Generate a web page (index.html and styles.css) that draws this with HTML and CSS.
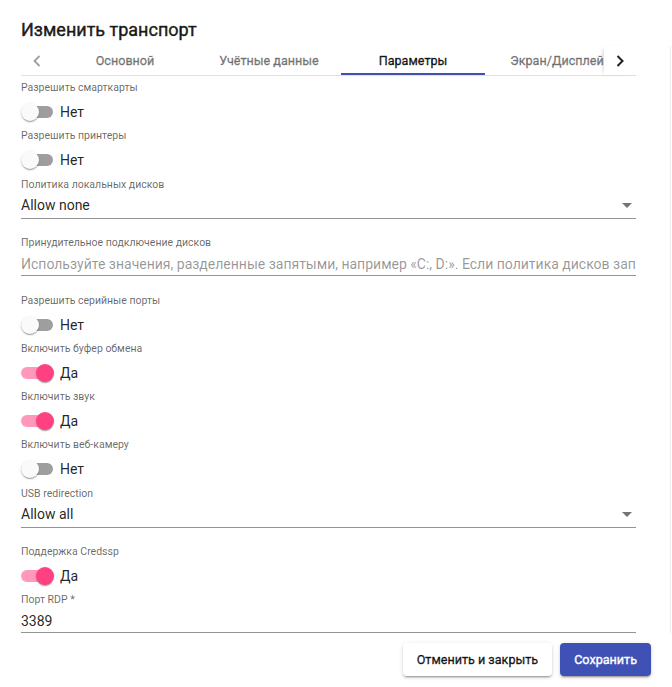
FILE: index.html
```html
<!DOCTYPE html>
<html lang="ru">
<head>
<meta charset="utf-8">
<title>Изменить транспорт</title>
<link rel="stylesheet" href="styles.css">
</head>
<body>
<div class="dialog">
  <h2 class="title">Изменить транспорт</h2>
  <div class="content">
    <div class="tabs">
      <div class="pager pager-left">
        <svg width="8" height="12" viewBox="0 0 8 12"><polyline points="6.5,1 1.5,6 6.5,11" fill="none" stroke="rgba(0,0,0,0.38)" stroke-width="1.8"/></svg>
      </div>
      <div class="tab-list">
        <div class="tab-track">
          <div class="tab">Основной</div>
          <div class="tab">Учётные данные</div>
          <div class="tab active">Параметры</div>
          <div class="tab">Экран/Дисплей</div>
        </div>
      </div>
      <div class="pager pager-right">
        <svg width="8" height="12" viewBox="0 0 8 12"><polyline points="1.5,1 6.5,6 1.5,11" fill="none" stroke="rgba(0,0,0,0.87)" stroke-width="2"/></svg>
      </div>
    </div>

    <div class="form">
      <div class="toggle-block">
        <div class="toggle-label">Разрешить смарткарты</div>
        <div class="toggle-row"><span class="switch"><span class="track"></span><span class="thumb"></span></span><span class="toggle-text">Нет</span></div>
      </div>
      <div class="toggle-block">
        <div class="toggle-label">Разрешить принтеры</div>
        <div class="toggle-row"><span class="switch"><span class="track"></span><span class="thumb"></span></span><span class="toggle-text">Нет</span></div>
      </div>

      <div class="field select-field">
        <div class="field-label">Политика локальных дисков</div>
        <div class="field-value"><span class="value-text">Allow none</span><span class="arrow"></span></div>
      </div>

      <div class="field input-field gap-toggle">
        <div class="field-label">Принудительное подключение дисков</div>
        <div class="field-value placeholder">Используйте значения, разделенные запятыми, например «C:, D:». Если политика дисков запрещает подключение, это поле игнорируется.</div>
      </div>

      <div class="toggle-block">
        <div class="toggle-label">Разрешить серийные порты</div>
        <div class="toggle-row"><span class="switch"><span class="track"></span><span class="thumb"></span></span><span class="toggle-text">Нет</span></div>
      </div>
      <div class="toggle-block">
        <div class="toggle-label">Включить буфер обмена</div>
        <div class="toggle-row"><span class="switch on"><span class="track"></span><span class="thumb"></span></span><span class="toggle-text">Да</span></div>
      </div>
      <div class="toggle-block">
        <div class="toggle-label">Включить звук</div>
        <div class="toggle-row"><span class="switch on"><span class="track"></span><span class="thumb"></span></span><span class="toggle-text">Да</span></div>
      </div>
      <div class="toggle-block">
        <div class="toggle-label">Включить веб-камеру</div>
        <div class="toggle-row"><span class="switch"><span class="track"></span><span class="thumb"></span></span><span class="toggle-text">Нет</span></div>
      </div>

      <div class="field select-field">
        <div class="field-label">USB redirection</div>
        <div class="field-value"><span class="value-text">Allow all</span><span class="arrow"></span></div>
      </div>

      <div class="toggle-block">
        <div class="toggle-label">Поддержка Credssp</div>
        <div class="toggle-row"><span class="switch on"><span class="track"></span><span class="thumb"></span></span><span class="toggle-text">Да</span></div>
      </div>

      <div class="field input-field last">
        <div class="field-label">Порт RDP *</div>
        <div class="field-value">3389</div>
      </div>
    </div>
  </div>

  <div class="actions">
    <button class="btn btn-cancel">Отменить и закрыть</button>
    <button class="btn btn-save">Сохранить</button>
  </div>
</div>
</body>
</html>
```

FILE: styles.css
```css
* { box-sizing: border-box; }

html, body {
  margin: 0;
  padding: 0;
  background: #ffffff;
}

body {
  font-family: Roboto, "Liberation Sans", sans-serif;
  color: rgba(0, 0, 0, 0.87);
  width: 672px;
  height: 687px;
  overflow: hidden;
}

.dialog {
  display: flex;
  flex-direction: column;
}

.title {
  margin: 0;
  padding: 14px 21px 0;
  font-size: 18px;
  font-weight: 400;
  -webkit-text-stroke: 0.45px currentColor;
  line-height: 32px;
  height: 46px;
  color: rgba(0, 0, 0, 0.87);
}

.content {
  margin-left: 21px;
  width: 650px;
  border-right: 1px solid #ededed;
  padding-right: 34px;
}

/* Tabs */
.tabs {
  display: flex;
  width: 615px;
  height: 30px;
  border-bottom: 1px solid rgba(0, 0, 0, 0.12);
}

.pager {
  width: 32px;
  flex-shrink: 0;
  display: flex;
  align-items: center;
  justify-content: center;
  background: #fff;
}

.pager-right {
  box-shadow: -3px 0 4px -3px rgba(0, 0, 0, 0.25);
}

.tab-list {
  flex: 1;
  overflow: hidden;
}

.tab-track {
  display: flex;
  height: 100%;
}

.tab {
  flex: 0 0 144px;
  display: flex;
  align-items: center;
  justify-content: center;
  font-size: 12.6px;
  font-weight: 400;
  -webkit-text-stroke: 0.35px currentColor;
  color: rgba(0, 0, 0, 0.87);
  opacity: 0.6;
  white-space: nowrap;
  border-bottom: 2px solid transparent;
  padding-top: 2px;
}

.tab.active {
  opacity: 1;
  border-bottom-color: #3f51b5;
}

/* Form */
.form {
  width: 615px;
  display: flex;
  flex-direction: column;
}

.toggle-block {
  display: flex;
  flex-direction: column;
}

.toggle-label {
  height: 24px;
  line-height: 24px;
  font-size: 10.5px;
  color: rgba(0, 0, 0, 0.6);
}

.toggle-row {
  height: 24px;
  display: flex;
  align-items: center;
  gap: 7px;
}

.switch {
  position: relative;
  width: 32px;
  height: 24px;
  flex-shrink: 0;
}

.track {
  position: absolute;
  left: 0;
  top: 6px;
  width: 32px;
  height: 12px;
  border-radius: 6px;
  background: rgba(0, 0, 0, 0.38);
}

.thumb {
  position: absolute;
  left: 0;
  top: 3px;
  width: 18px;
  height: 18px;
  border-radius: 50%;
  background: #fafafa;
  box-shadow: 0 2px 1px -1px rgba(0, 0, 0, 0.2), 0 1px 1px 0 rgba(0, 0, 0, 0.14), 0 1px 3px 0 rgba(0, 0, 0, 0.12);
}

.switch.on .track {
  background: rgba(255, 64, 129, 0.54);
}

.switch.on .thumb {
  left: 15px;
  background: #ff4081;
}

.toggle-text {
  font-size: 14px;
  line-height: 24px;
  color: rgba(0, 0, 0, 0.87);
}

.field {
  display: flex;
  flex-direction: column;
  border-bottom: 1px solid rgba(0, 0, 0, 0.42);
}

.field-label {
  font-size: 10.5px;
  line-height: 14px;
  height: 14px;
  color: rgba(0, 0, 0, 0.6);
  white-space: nowrap;
}

.select-field {
  padding-top: 6px;
  padding-bottom: 1px;
  margin-bottom: 12px;
}

.select-field .field-value {
  margin-top: 1px;
  height: 24px;
  line-height: 24px;
  display: flex;
  align-items: center;
  justify-content: space-between;
}

.input-field {
  padding-top: 5px;
}

.input-field .field-value {
  margin-top: 3px;
  height: 22px;
  line-height: 22px;
}

.input-field.gap-toggle {
  margin-bottom: 13px;
}

.field-value {
  font-size: 14px;
  color: rgba(0, 0, 0, 0.87);
  white-space: nowrap;
  overflow: hidden;
}

.field-value.placeholder {
  color: rgba(0, 0, 0, 0.42);
}

.arrow {
  width: 0;
  height: 0;
  border-left: 5px solid transparent;
  border-right: 5px solid transparent;
  border-top: 5px solid rgba(0, 0, 0, 0.54);
  margin-right: 4px;
  margin-top: 1px;
}

/* Actions */
.actions {
  display: flex;
  justify-content: flex-end;
  gap: 8px;
  padding: 10px 21px 0 0;
}

.btn {
  height: 33px;
  padding: 0 14px;
  border: none;
  border-radius: 4px;
  font-family: Roboto, "Liberation Sans", sans-serif;
  font-size: 12.6px;
  font-weight: 400;
  -webkit-text-stroke: 0.35px currentColor;
  line-height: 33px;
  box-shadow: 0 3px 1px -2px rgba(0, 0, 0, 0.2), 0 2px 2px 0 rgba(0, 0, 0, 0.14), 0 1px 5px 0 rgba(0, 0, 0, 0.12);
  cursor: pointer;
}

.btn-cancel {
  background: #ffffff;
  color: rgba(0, 0, 0, 0.87);
}

.btn-save {
  background: #3f51b5;
  color: #ffffff;
}
```
